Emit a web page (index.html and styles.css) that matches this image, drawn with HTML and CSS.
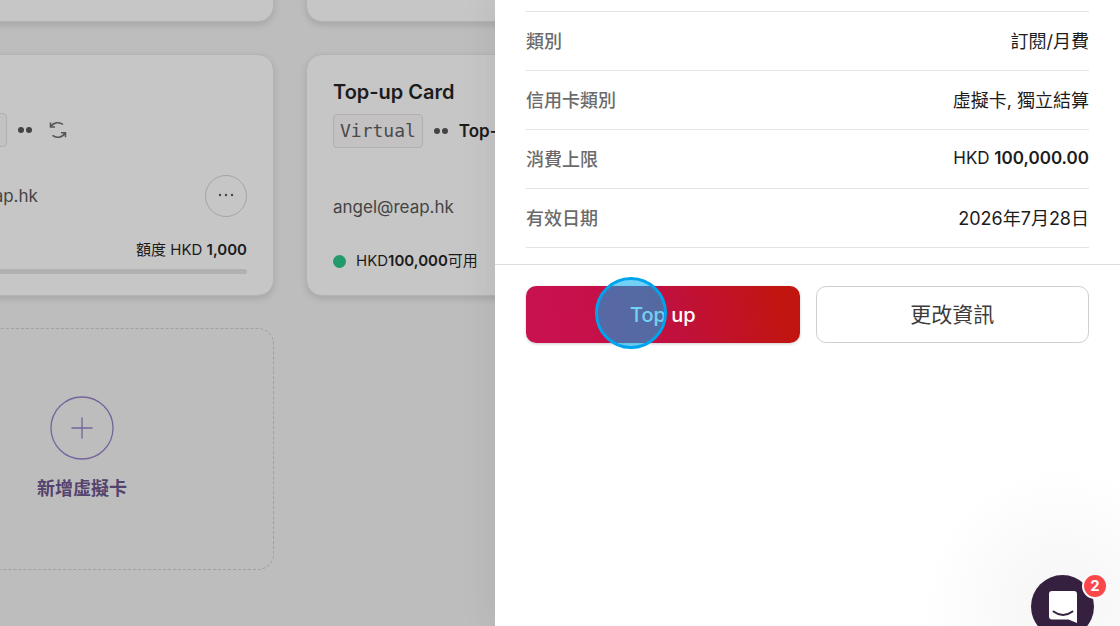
FILE: index.html
```html
<!DOCTYPE html>
<html lang="zh-Hant">
<head>
<meta charset="utf-8">
<meta name="viewport" content="width=device-width, initial-scale=1">
<title>Top-up Card</title>
<link rel="stylesheet" href="styles.css">
</head>
<body>
<div class="layout">
  <main class="cards-view">
    <div class="cards">
      <article class="card card-scrolled">
        <div class="meter"></div>
      </article>
      <article class="card card-scrolled">
        <div class="meter"></div>
      </article>

      <article class="card card-metered">
        <div class="meta">
          <span class="chip">Virtual</span>
          <span class="dots"><i></i><i></i></span>
          <svg class="refresh" viewBox="0 0 18 18" aria-hidden="true">
            <path d="M1.5 1.5V6H6M1.8 5.7C4.6 1.2 10.500 .7 14 3.500M16.500 16.300V11.800H12M16.200 12C13.200 16.900 7.300 17.500 3.500 14.400"/>
          </svg>
        </div>
        <div class="owner">
          <span>angel@reap.hk</span>
          <button class="more" type="button" aria-label="更多">
            <svg viewBox="0 0 16 4" aria-hidden="true"><circle cx="2" cy="2" r="1.200"/><circle cx="8" cy="2" r="1.200"/><circle cx="14" cy="2" r="1.200"/></svg>
          </button>
        </div>
        <p class="limit">額度 HKD <b>1,000</b></p>
        <div class="meter"></div>
      </article>

      <article class="card">
        <h2 class="card-title">Top-up Card</h2>
        <div class="meta">
          <span class="chip">Virtual</span>
          <span class="dots"><i></i><i></i></span>
          <strong class="alias">Top-up Card</strong>
        </div>
        <div class="owner"><span>angel@reap.hk</span></div>
        <p class="available"><span class="status"></span><span>HKD<b>100,000</b>可用</span></p>
      </article>

      <button class="add-card" type="button">
        <svg class="add-icon" viewBox="0 0 64 64" aria-hidden="true">
          <circle cx="32" cy="32" r="31"/>
          <path d="M32 21.500V42.500M21.500 32H42.500"/>
        </svg>
        <span>新增虛擬卡</span>
      </button>
    </div>
  </main>

  <aside class="drawer">
    <dl class="details">
      <div class="row"><dt>類別</dt><dd>訂閱/月費</dd></div>
      <div class="row"><dt>信用卡類別</dt><dd>虛擬卡, 獨立結算</dd></div>
      <div class="row"><dt>消費上限</dt><dd class="amount">HKD <b>100,000.00</b></dd></div>
      <div class="row"><dt>有效日期</dt><dd>2026年7月28日</dd></div>
    </dl>
    <div class="actions">
      <button class="btn btn-primary" type="button">Top up<span class="click-marker"></span></button>
      <button class="btn btn-outline" type="button">更改資訊</button>
    </div>
  </aside>

  <div class="chat-glow"></div>
  <button class="chat" type="button" aria-label="2">
    <svg class="chat-icon" viewBox="0 0 28 32" aria-hidden="true">
      <path class="bubble" d="M3 0H25Q28 0 28 3V32L19.500 28.500H3Q0 28.500 0 25.500V3Q0 0 3 0Z"/>
      <path class="smile" d="M4.500 20.500Q14 27.500 23.500 20.500"/>
    </svg>
    <span class="badge">2</span>
  </button>
</div>
</body>
</html>
```
FILE: styles.css
```css
* { box-sizing: border-box; }

body {
  margin: 0;
  font-family: Inter, "Noto Sans CJK TC", sans-serif;
  font-size: 18px;
  color: #1c1c1c;
}

button { font: inherit; color: inherit; margin: 0; }
h2, p, dl, dd { margin: 0; }
b { font-weight: 600; }

.layout {
  position: relative;
  display: grid;
  grid-template-columns: 99fr 125fr;
  height: 100vh;
  overflow: hidden;
}

/* Dimmed card list behind the drawer */
.cards-view {
  overflow: hidden;
  background: #bdbdbd;
}

.cards {
  display: grid;
  grid-template-columns: 384px 384px;
  grid-auto-rows: 242px;
  gap: 32px;
  margin: -220px 0 0 -110px;
}

.card {
  display: flex;
  flex-direction: column;
  padding: 23px 26px 21px;
  border: 1px solid #b3b3b3;
  border-radius: 16px;
  background: #c6c6c6;
  box-shadow: 0 3px 6px rgba(60, 50, 50, 0.16);
}

.card-scrolled { justify-content: flex-end; }
.card-metered { padding-top: 58px; }

.card-title {
  font-size: 20px;
  line-height: 28px;
  font-weight: 600;
}

.meta {
  display: flex;
  align-items: center;
  height: 34px;
  white-space: nowrap;
}
.card-title + .meta { margin-top: 8px; }

.chip {
  padding: 0 6px;
  border: 1px solid #b1afaf;
  border-radius: 4px;
  background: #c3c1c1;
  color: #4a4a4a;
  font: 18px/32px "DejaVu Sans Mono", monospace;
}

.dots { display: flex; gap: 2px; margin-left: 11px; }
.dots i {
  width: 6px;
  height: 6px;
  border-radius: 50%;
  background: #444;
}

.alias { margin-left: 11px; font-size: 17px; font-weight: 600; }

.refresh {
  width: 18px;
  height: 18px;
  margin-left: 17px;
  fill: none;
  stroke: #555;
  stroke-width: 1.5;
}

.owner {
  display: flex;
  align-items: center;
  justify-content: space-between;
  height: 42px;
  margin-top: 28px;
  color: #444;
  font-size: 17px;
}
.card-title + .meta + .owner { margin-top: 38px; }

.more {
  display: grid;
  place-items: center;
  width: 42px;
  height: 42px;
  padding: 0 0 3px;
  border: 1px solid #a5a5a5;
  border-radius: 50%;
  background: none;
}
.more svg { width: 16px; fill: #444; }

.limit {
  margin-top: 21px;
  font-size: 15px;
  line-height: 24px;
  text-align: right;
}

.meter {
  flex: none;
  height: 5px;
  border-radius: 3px;
  background: #b1b1b1;
}
.limit + .meter { margin-top: 7px; }

.available {
  display: flex;
  align-items: center;
  gap: 10px;
  margin-top: 21px;
  font-size: 15px;
  line-height: 24px;
  white-space: nowrap;
}
.status {
  width: 13px;
  height: 13px;
  border-radius: 50%;
  background: #229a6c;
}

.add-card {
  display: flex;
  flex-direction: column;
  align-items: center;
  justify-content: center;
  gap: 15px;
  padding: 0;
  border: 1px dashed #a0a0a0;
  border-radius: 16px;
  background: none;
  color: #54436e;
  font-weight: 700;
  line-height: 28px;
}
.add-icon {
  width: 64px;
  height: 64px;
  fill: none;
  stroke: #75659a;
  stroke-width: 1.3;
}

/* Card detail drawer */
.drawer {
  position: relative;
  background: #fff;
  box-shadow: 0 0 36px rgba(0, 0, 0, 0.08);
}

.details {
  margin: 11px 31px 16px;
  border-top: 1px solid #e3e3e3;
}
.row {
  display: flex;
  align-items: center;
  justify-content: space-between;
  height: 59px;
  padding-bottom: 2px;
  border-bottom: 1px solid #e3e3e3;
}
dt { color: #6b6b6b; font-weight: 500; }
.amount { font-size: 17px; }

.actions {
  display: grid;
  grid-template-columns: 1fr 1fr;
  gap: 16px;
  padding: 21px 31px;
  border-top: 1px solid #dedede;
}
.btn {
  position: relative;
  height: 57px;
  padding: 0;
  border-radius: 10px;
  font-size: 21px;
}
.btn-primary {
  border: 0;
  background: linear-gradient(75deg, #c8114f 10%, #c0103c 55%, #c11510 92%);
  box-shadow: 0 1px 3px rgba(0, 0, 0, 0.2);
  color: #fff;
  font-size: 20px;
  font-weight: 500;
}
.btn-outline {
  padding-bottom: 4px;
  border: 1px solid #cfcfcf;
  background: #fff;
  color: #3c3c3c;
}

.click-marker {
  position: absolute;
  top: -9px;
  left: 69px;
  width: 72px;
  height: 72px;
  border: 3px solid #00a4ec;
  border-radius: 50%;
  background: rgba(0, 174, 239, 0.56);
}

/* Support chat launcher */
.chat-glow {
  position: absolute;
  right: 0;
  bottom: 0;
  width: 200px;
  height: 160px;
  background: radial-gradient(circle at 142px 140px, rgba(0, 0, 0, 0.04), transparent 140px);
  pointer-events: none;
}
.chat {
  position: absolute;
  right: 26px;
  bottom: -12px;
  display: grid;
  place-items: center;
  width: 63px;
  height: 63px;
  padding: 0;
  border: 0;
  border-radius: 50%;
  background: #35203f;
}
.chat-icon { width: 28px; height: 32px; }
.bubble { fill: #fff; }
.smile { fill: none; stroke: #35203f; stroke-width: 2; stroke-linecap: round; }
.badge {
  position: absolute;
  top: -2px;
  right: -14px;
  width: 26px;
  height: 26px;
  border: 2px solid #fafafa;
  border-radius: 50%;
  background: #fc474a;
  color: #fff;
  font: 700 15px/22px Inter, sans-serif;
  text-align: center;
}
```
